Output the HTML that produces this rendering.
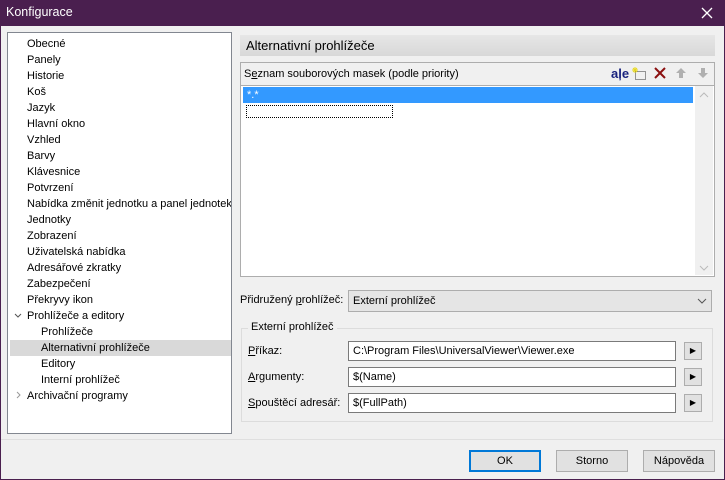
<!DOCTYPE html>
<html><head><meta charset="utf-8"><style>
*{box-sizing:border-box;margin:0;padding:0}
body{width:725px;height:480px;overflow:hidden;background:#f0f0f0;font-family:"Liberation Sans",sans-serif;font-size:11px;color:#000;position:relative}
.abs{position:absolute}
.win{left:0;top:0;width:725px;height:480px;border:1px solid #4a1f4f;border-top:none}
.title{left:0;top:0;width:725px;height:26px;background:#4a1f4f;color:#fff;font-size:12.5px;padding:5px 0 0 6px}
.tree{left:7px;top:32px;width:225px;height:402px;background:#fff;border:1px solid #828790;overflow:hidden}
.ti{position:absolute;white-space:nowrap;line-height:16px}
.sel{left:2px;width:222px;height:16px;background:#d9d9d9}
.hdr{left:240px;top:35px;width:475px;height:21px;background:linear-gradient(#e6e6e6,#d8d8d8);font-size:13px;padding:3px 0 0 6px}
.grp{left:240px;top:62px;width:475px;height:215px;border:1px solid #adadad;background:#f0f0f0}
.list{left:241px;top:85px;width:473px;height:191px;background:#fff;border-top:1px solid #adadad}
.inp{background:#fff;border:1px solid #7a7a7a;height:20px;padding:3px 4px;white-space:nowrap}
.btn{background:#e1e1e1;border:1px solid #adadad;text-align:center}
.arr{width:18px;height:18px;background:#e1e1e1;border:1px solid #adadad;font-size:8px;text-align:center;line-height:16px}
u{text-decoration:underline}
</style></head><body>
<div class="abs title">Konfigurace</div>
<svg class="abs" style="left:700px;top:6px" width="14" height="14"><path d="M2 2L12 12M12 2L2 12" stroke="#fff" stroke-width="1.3"/></svg>
<div class="abs win"></div>
<div class="abs tree">
<div class="ti sel" style="top:307px"></div>
<div class="ti" style="left:19px;top:3px">Obecné</div>
<div class="ti" style="left:19px;top:19px">Panely</div>
<div class="ti" style="left:19px;top:35px">Historie</div>
<div class="ti" style="left:19px;top:51px">Koš</div>
<div class="ti" style="left:19px;top:67px">Jazyk</div>
<div class="ti" style="left:19px;top:83px">Hlavní okno</div>
<div class="ti" style="left:19px;top:99px">Vzhled</div>
<div class="ti" style="left:19px;top:115px">Barvy</div>
<div class="ti" style="left:19px;top:131px">Klávesnice</div>
<div class="ti" style="left:19px;top:147px">Potvrzení</div>
<div class="ti" style="left:19px;top:163px">Nabídka změnit jednotku a panel jednotek</div>
<div class="ti" style="left:19px;top:179px">Jednotky</div>
<div class="ti" style="left:19px;top:195px">Zobrazení</div>
<div class="ti" style="left:19px;top:211px">Uživatelská nabídka</div>
<div class="ti" style="left:19px;top:227px">Adresářové zkratky</div>
<div class="ti" style="left:19px;top:243px">Zabezpečení</div>
<div class="ti" style="left:19px;top:259px">Překryvy ikon</div>
<svg class="abs" style="left:6px;top:280px" width="8" height="6"><path d="M1 1L4 4L7 1" stroke="#555" fill="none"/></svg>
<div class="ti" style="left:19px;top:275px">Prohlížeče a editory</div>
<div class="ti" style="left:33px;top:291px">Prohlížeče</div>
<div class="ti" style="left:33px;top:307px">Alternativní prohlížeče</div>
<div class="ti" style="left:33px;top:323px">Editory</div>
<div class="ti" style="left:33px;top:339px">Interní prohlížeč</div>
<svg class="abs" style="left:8px;top:358px" width="6" height="8"><path d="M1 1L4 4L1 7" stroke="#999" fill="none"/></svg>
<div class="ti" style="left:19px;top:355px">Archivační programy</div>
</div>
<div class="abs hdr">Alternativní prohlížeče</div>
<div class="abs grp"></div>
<div class="abs" style="left:244px;top:68px">S<u>e</u>znam souborových masek (podle priority)</div>
<div class="abs" style="left:611px;top:66px;font-weight:bold;color:#1a237e;font-size:13px">aļe</div>
<svg class="abs" style="left:632px;top:66px" width="16" height="16"><rect x="3.5" y="5.5" width="10" height="8" fill="none" stroke="#333" stroke-dasharray="1,1"/><path d="M3 1V7M0 4H6M1 2L5 6M5 2L1 6" stroke="#e8d820"/></svg>
<svg class="abs" style="left:653px;top:66px" width="14" height="14"><path d="M2 2L12 12M12 2L2 12" stroke="#8b1010" stroke-width="2"/></svg>
<svg class="abs" style="left:674px;top:66px" width="14" height="14"><path d="M7 2L2 7H5V12H9V7H12Z" fill="#b0b0b0"/></svg>
<svg class="abs" style="left:696px;top:66px" width="14" height="14"><path d="M7 12L2 7H5V2H9V7H12Z" fill="#b0b0b0"/></svg>
<div class="abs list"></div>
<div class="abs" style="left:243px;top:87px;width:450px;height:16px;background:#3399ff;color:#fff;padding:1px 4px;line-height:14px">*.*</div>
<div class="abs" style="left:246px;top:105px;width:147px;height:13px;border:1px dotted #000"></div>
<div class="abs" style="left:695px;top:86px;width:18px;height:189px;background:#f0f0f0"></div>
<svg class="abs" style="left:699px;top:92px" width="10" height="6"><path d="M1 5L5 1L9 5" stroke="#bbb" fill="none"/></svg>
<svg class="abs" style="left:699px;top:265px" width="10" height="6"><path d="M1 1L5 5L9 1" stroke="#bbb" fill="none"/></svg>
<div class="abs" style="left:240px;top:294px">Přidružený <u>p</u>rohlížeč:</div>
<div class="abs" style="left:348px;top:290px;width:364px;height:22px;background:#e5e5e5;border:1px solid #adadad;padding:4px 4px">Externí prohlížeč</div>
<svg class="abs" style="left:697px;top:298px" width="10" height="6"><path d="M1 1L5 5L9 1" stroke="#555" fill="none"/></svg>
<div class="abs" style="left:241px;top:328px;width:472px;height:94px;border:1px solid #dcdcdc"></div>
<div class="abs" style="left:248px;top:321px;background:#f0f0f0;padding:0 3px">Externí prohlížeč</div>
<div class="abs" style="left:248px;top:345px"><u>P</u>říkaz:</div>
<div class="abs" style="left:248px;top:371px"><u>A</u>rgumenty:</div>
<div class="abs" style="left:248px;top:397px"><u>S</u>pouštěcí adresář:</div>
<div class="abs inp" style="left:348px;top:341px;width:328px">C:\Program Files\UniversalViewer\Viewer.exe</div>
<div class="abs inp" style="left:348px;top:367px;width:328px">$(Name)</div>
<div class="abs inp" style="left:348px;top:393px;width:328px">$(FullPath)</div>
<div class="abs arr" style="left:684px;top:342px">▶</div>
<div class="abs arr" style="left:684px;top:368px">▶</div>
<div class="abs arr" style="left:684px;top:394px">▶</div>
<div class="abs" style="left:1px;top:439px;width:723px;height:1px;background:#dfdfdf"></div>
<div class="abs btn" style="left:469px;top:450px;width:72px;height:22px;border:2px solid #0078d7;line-height:18px">OK</div>
<div class="abs btn" style="left:556px;top:450px;width:72px;height:22px;line-height:20px">Storno</div>
<div class="abs btn" style="left:643px;top:450px;width:72px;height:22px;line-height:20px">Nápověda</div>
</body></html>
